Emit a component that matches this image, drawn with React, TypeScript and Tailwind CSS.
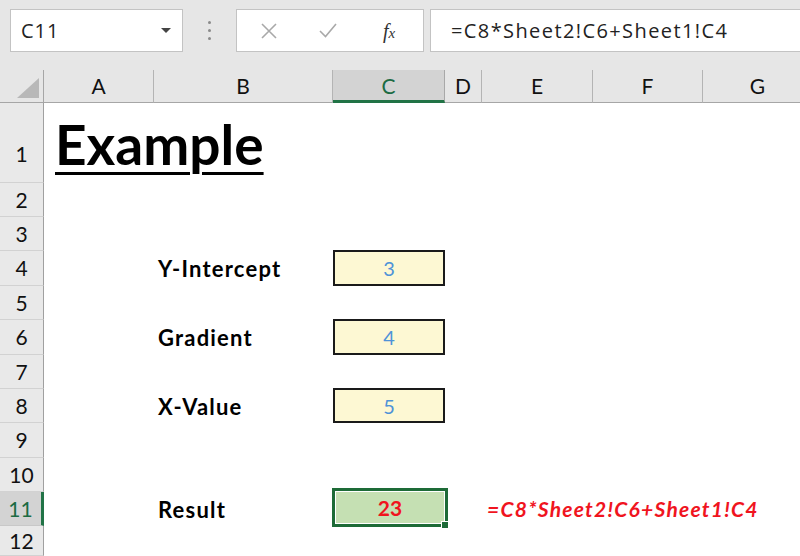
import React from "react";

const COLS = ["A", "B", "C", "D", "E", "F", "G"];
const ROW_H = [80, 34, 34, 35, 34, 35, 34, 34, 35, 34, 34, 30];

const cellFont = { fontFamily: "Lato, 'Open Sans', sans-serif" };

function YellowBox({ v }: { v: string }) {
  return (
    <div className="absolute left-0 top-[-1px] right-0 bottom-0 border-2 border-[#1a1a1a] bg-[#fdf8d3] flex items-center justify-center text-[20px] text-[#4f93d8]">
      {v}
    </div>
  );
}

function Label({ t }: { t: string }) {
  return <span className="pl-[4px] text-[22px] tracking-[1.2px] font-bold text-black whitespace-nowrap">{t}</span>;
}

export default function App() {
  const cells: Record<string, React.ReactNode> = {
    "1-A": (
      <div className="absolute left-[11px] bottom-[11px] text-[55px] leading-none font-bold underline decoration-[3px] underline-offset-[7px] text-black whitespace-nowrap">
        Example
      </div>
    ),
    "4-B": <Label t="Y-Intercept" />,
    "6-B": <Label t="Gradient" />,
    "8-B": <Label t="X-Value" />,
    "11-B": <Label t="Result" />,
    "4-C": <YellowBox v="3" />,
    "6-C": <YellowBox v="4" />,
    "8-C": <YellowBox v="5" />,
    "11-C": (
      <>
        <div className="absolute left-[-1px] top-[-4px] right-[-3px] bottom-[-1px] border-[3px] border-[#1d6b37] bg-white p-px">
          <div className="w-full h-full bg-[#c5e0b3] flex items-center justify-center text-[21px] font-bold text-[#f0141e]">
            23
          </div>
        </div>
        <div className="absolute right-[-4px] bottom-[-3px] w-[8px] h-[8px] bg-[#1d6b37] border border-white" />
      </>
    ),
    "11-E": (
      <span className="absolute left-[5px] top-0 bottom-0 flex items-center text-[21px] tracking-[1.25px] font-bold italic text-[#f0141e] whitespace-nowrap">
        =C8*Sheet2!C6+Sheet1!C4
      </span>
    ),
  };

  return (
    <div className="w-[800px] h-[556px] overflow-hidden bg-white relative" style={cellFont}>
      {/* Toolbar */}
      <div className="h-[70px] bg-[#e6e6e6] flex items-start pt-[9px]" style={{ fontFamily: "'Open Sans', 'Noto Sans', sans-serif" }}>
        <div className="ml-[10px] w-[173px] h-[43px] bg-white border border-[#c3c3c3] flex items-center justify-between pl-[10px] pr-[11px]">
          <span className="text-[20px] tracking-[1px] text-[#222]">C11</span>
          <svg width="10" height="6" viewBox="0 0 10 6">
            <path d="M0 0 L10 0 L5 5 Z" fill="#444" />
          </svg>
        </div>
        <div className="w-[53px] h-[43px] flex flex-col items-center justify-center gap-[5px]">
          <div className="w-[3px] h-[3px] rounded-full bg-[#8a8a8a]" />
          <div className="w-[3px] h-[3px] rounded-full bg-[#8a8a8a]" />
          <div className="w-[3px] h-[3px] rounded-full bg-[#8a8a8a]" />
        </div>
        <div className="w-[188px] h-[43px] bg-white border border-[#c3c3c3] flex items-center">
          <svg className="ml-[24px]" width="16" height="16" viewBox="0 0 16 16">
            <path d="M1 1 L15 15 M15 1 L1 15" stroke="#a9a9a9" strokeWidth="1.6" fill="none" />
          </svg>
          <svg className="ml-[42px]" width="18" height="15" viewBox="0 0 18 15">
            <path d="M1 8 L6.5 13.5 L17 1" stroke="#a9a9a9" strokeWidth="1.6" fill="none" />
          </svg>
          <span
            className="ml-[46px] text-[20px] italic text-[#333]"
            style={{ fontFamily: "'Liberation Serif', serif" }}
          >
            f<span className="text-[15px]">x</span>
          </span>
        </div>
        <div className="ml-[6px] flex-1 h-[43px] bg-white border border-[#c3c3c3] border-r-0 flex items-center pl-[20px]">
          <span className="text-[20px] tracking-[1.4px] text-[#222] whitespace-nowrap">=C8*Sheet2!C6+Sheet1!C4</span>
        </div>
      </div>

      {/* Grid */}
      <div className="grid grid-cols-[44px_110px_179px_112px_37px_111px_110px_110px]">
        {/* Header row */}
        <div className="h-[33px] bg-[#e6e6e6] border-b border-[#a6a6a6] border-r border-[#a0a0a0] relative">
          <svg className="absolute left-[17px] top-[8px]" width="22" height="20" viewBox="0 0 22 20">
            <path d="M22 0 L22 20 L0 20 Z" fill="#b8b8b8" />
          </svg>
        </div>
        {COLS.map((c) => {
          const sel = c === "C";
          return (
            <div
              key={c}
              className={
                sel
                  ? "h-[33px] bg-[#d3d3d3] border-b-[3px] border-[#217346] border-r border-r-[#a8a8a8] flex items-center justify-center text-[21px] text-[#1c6b43] pt-[2px]"
                  : "h-[33px] bg-[#e6e6e6] border-b border-[#a6a6a6] border-r border-r-[#b4b4b4] flex items-center justify-center text-[21px] text-[#111]"
              }
            >
              {c}
            </div>
          );
        })}

        {ROW_H.map((h, i) => {
          const r = i + 1;
          const sel = r === 11;
          const align = r === 1 ? "items-end pb-[13px]" : "items-center";
          return (
            <React.Fragment key={r}>
              <div
                className={
                  sel
                    ? `bg-[#d3d3d3] border-r-[3px] border-[#217346] border-b border-b-[#c8c8c8] flex justify-center text-[21px] text-[#1c6b43] ${align}`
                    : `bg-[#e9e9e9] border-r border-[#a0a0a0] border-b border-b-[#d2d2d2] flex justify-center text-[21px] text-[#111] ${align}`
                }
                style={{ height: h }}
              >
                {r}
              </div>
              {COLS.map((c) => (
                <div key={c} className="relative flex items-center" style={{ height: h }}>
                  {cells[`${r}-${c}`]}
                </div>
              ))}
            </React.Fragment>
          );
        })}
      </div>
    </div>
  );
}
